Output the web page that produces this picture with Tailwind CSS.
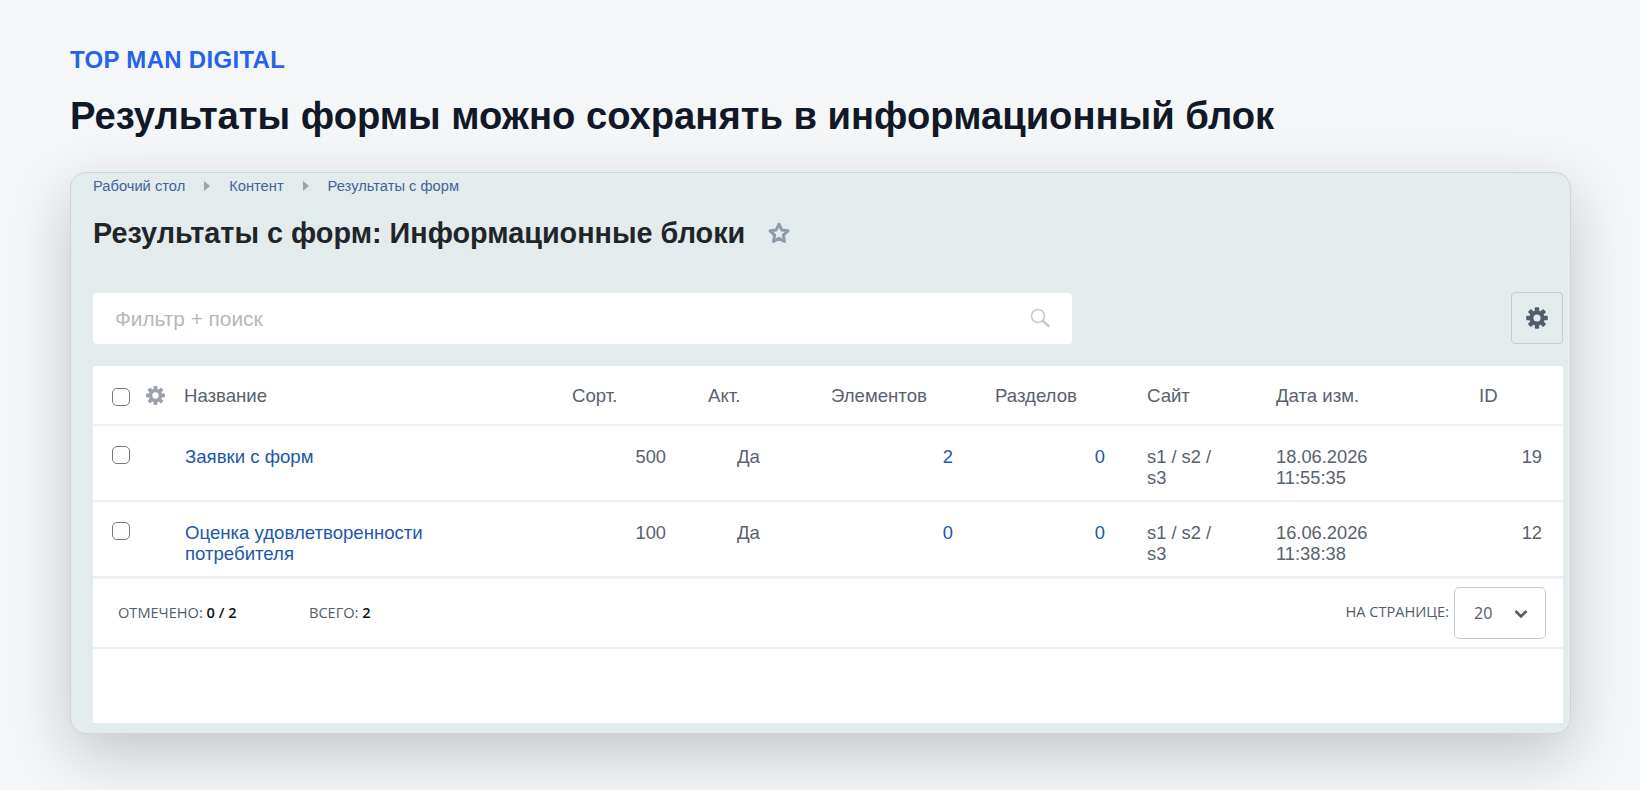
<!doctype html>
<html lang="ru">
<head>
<meta charset="utf-8">
<title>Результаты формы</title>
<script src="https://cdn.jsdelivr.net/npm/@tailwindcss/browser@4"></script>
</head>
<body class="m-0 h-[790px] w-[1640px] overflow-hidden bg-[#f4f6f8] font-['Liberation_Sans',Arial,sans-serif]">
<svg class="absolute h-0 w-0" aria-hidden="true"><defs>
  <g id="cog"><path fill-rule="evenodd" d="M12 4.400a7.600 7.600 0 1 0 0 15.200a7.600 7.600 0 0 0 0-15.200zM12 8.400a3.600 3.600 0 1 1 0 7.200a3.600 3.600 0 0 1 0-7.200z"/><rect x="9.800" y="1.200" width="4.400" height="5" rx="1"/><rect x="9.800" y="1.200" width="4.400" height="5" rx="1" transform="rotate(45 12 12)"/><rect x="9.800" y="1.200" width="4.400" height="5" rx="1" transform="rotate(90 12 12)"/><rect x="9.800" y="1.200" width="4.400" height="5" rx="1" transform="rotate(135 12 12)"/><rect x="9.800" y="1.200" width="4.400" height="5" rx="1" transform="rotate(180 12 12)"/><rect x="9.800" y="1.200" width="4.400" height="5" rx="1" transform="rotate(225 12 12)"/><rect x="9.800" y="1.200" width="4.400" height="5" rx="1" transform="rotate(270 12 12)"/><rect x="9.800" y="1.200" width="4.400" height="5" rx="1" transform="rotate(315 12 12)"/></g>
</defs></svg>
<main class="flex flex-col pl-[70px] pr-[69px]">
  <p class="mt-[44px] h-[32px] text-[24px] leading-[32px] font-bold tracking-[0.3px] text-[#2563eb]">TOP MAN DIGITAL</p>
  <h1 class="mt-[18px] h-[44px] text-[38.2px] leading-[44px] font-bold text-[#111827]">Результаты формы можно сохранять в информационный блок</h1>
  <section class="mt-[34px] flex h-[562px] flex-col rounded-[16px] border border-[#cdd5da] bg-[#e3ebed] pl-[22px] pr-[7px] pb-[10px] shadow-[0_20px_60px_rgba(0,0,0,0.2)]">
    <nav class="mt-[6px] flex h-[14px] items-center text-[14.7px] leading-[14px] text-[#3f659b]">
      <a>Рабочий стол</a>
      <svg class="mx-[19px] h-[10px] w-[6px]" viewBox="0 0 6 10"><path d="M0 0l6 5-6 5z" fill="#9aa5ae"/></svg>
      <a>Контент</a>
      <svg class="mx-[19px] h-[10px] w-[6px]" viewBox="0 0 6 10"><path d="M0 0l6 5-6 5z" fill="#9aa5ae"/></svg>
      <a>Результаты с форм</a>
    </nav>
    <div class="mt-[24px] flex h-[32px] items-center">
      <h2 class="text-[28.8px] leading-[32px] font-bold text-[#1f2529]">Результаты с форм: Информационные блоки</h2>
      <svg class="ml-[22px] h-[24px] w-[24px]" viewBox="0 0 24 24"><path d="M12 3.200l2.700 5.700 6.300.9-4.600 4.400 1.100 6.200-5.500-3-5.500 3 1.100-6.200-4.600-4.400 6.300-.9z" fill="none" stroke="#8f9bab" stroke-width="3" stroke-linejoin="round"/></svg>
    </div>
    <div class="mt-[43px] flex items-center justify-between">
      <div class="flex h-[51px] w-[979px] items-center justify-between rounded-[4px] bg-white pl-[22px] pr-[22px] text-[20.8px] text-[#b4b8bc]">
        <span class="pt-[1px]">Фильтр + поиск</span>
        <svg class="h-[20px] w-[20px]" viewBox="0 0 20 20" fill="none" stroke="#c6c9cc"><circle cx="8" cy="8" r="6.500" stroke-width="1.600"/><path d="M13 13l5.500 5" stroke-width="2.600" stroke-linecap="round"/></svg>
      </div>
      <button class="flex h-[52px] w-[52px] items-center justify-center rounded-[4px] border border-[#c3ccd2] bg-[#e3ebed]">
        <svg class="h-[24px] w-[24px] fill-[#535c69]" viewBox="0 0 24 24"><use href="#cog"/></svg>
      </button>
    </div>
    <div class="mt-[22px] flex flex-1 flex-col bg-white">
      <table class="w-full table-fixed border-collapse text-[18.6px] leading-[21px] text-[#59626e]">
        <colgroup>
          <col class="w-[91px]"><col class="w-[388px]"><col class="w-[136px]"><col class="w-[123px]"><col class="w-[164px]"><col class="w-[152px]"><col class="w-[129px]"><col class="w-[203px]"><col>
        </colgroup>
        <thead>
          <tr class="h-[59px] border-b-2 border-[#eef1f4] text-left">
            <th class="relative font-normal">
              <span class="absolute left-[19px] top-[22px] h-[18px] w-[18px] rounded-[5px] border-[1.500px] border-[#74777c]"></span>
              <svg class="absolute left-[52px] top-[19px] h-[21px] w-[21px] fill-[#9aa1aa]" viewBox="0 0 24 24"><use href="#cog"/></svg>
            </th>
            <th class="font-normal">Название</th>
            <th class="font-normal">Сорт.</th>
            <th class="font-normal">Акт.</th>
            <th class="font-normal">Элементов</th>
            <th class="font-normal">Разделов</th>
            <th class="font-normal">Сайт</th>
            <th class="font-normal">Дата изм.</th>
            <th class="font-normal">ID</th>
          </tr>
        </thead>
        <tbody>
          <tr class="h-[76px] border-b-2 border-[#eef1f4] align-top">
            <td class="relative"><span class="absolute left-[19px] top-[20px] h-[18px] w-[18px] rounded-[5px] border-[1.500px] border-[#74777c]"></span></td>
            <td class="pt-[20px] pl-[1px] text-[#2157ab]">Заявки с форм</td>
            <td class="pt-[20px] pr-[42px] text-right text-[18.3px]">500</td>
            <td class="pt-[20px] pl-[29px]">Да</td>
            <td class="pt-[20px] pr-[42px] text-right text-[18.3px] text-[#2157ab]">2</td>
            <td class="pt-[20px] pr-[42px] text-right text-[18.3px] text-[#2157ab]">0</td>
            <td class="pt-[20px] pr-[50px] text-[18.3px]">s1 / s2 / s3</td>
            <td class="pt-[20px] text-[18.3px]">18.06.2026<br>11:55:35</td>
            <td class="pt-[20px] pr-[21px] text-right text-[18.3px]">19</td>
          </tr>
          <tr class="h-[76px] border-b-[3px] border-[#eef1f4] align-top">
            <td class="relative"><span class="absolute left-[19px] top-[20px] h-[18px] w-[18px] rounded-[5px] border-[1.500px] border-[#74777c]"></span></td>
            <td class="pt-[20px] pl-[1px] text-[#2157ab]">Оценка удовлетворенности<br>потребителя</td>
            <td class="pt-[20px] pr-[42px] text-right text-[18.3px]">100</td>
            <td class="pt-[20px] pl-[29px]">Да</td>
            <td class="pt-[20px] pr-[42px] text-right text-[18.3px] text-[#2157ab]">0</td>
            <td class="pt-[20px] pr-[42px] text-right text-[18.3px] text-[#2157ab]">0</td>
            <td class="pt-[20px] pr-[50px] text-[18.3px]">s1 / s2 / s3</td>
            <td class="pt-[20px] text-[18.3px]">16.06.2026<br>11:38:38</td>
            <td class="pt-[20px] pr-[21px] text-right text-[18.3px]">12</td>
          </tr>
        </tbody>
      </table>
      <div class="flex h-[70px] items-center justify-between border-b-2 border-[#eef1f4] pl-[25px] pr-[17px] font-['Open_Sans',sans-serif] text-[14.6px] font-medium text-[#535c69]">
        <div class="flex pt-[1px]">
          <span class="w-[191px]">ОТМЕЧЕНО: <span class="font-semibold text-[#111]">0 / 2</span></span>
          <span>ВСЕГО: <span class="font-semibold text-[#111]">2</span></span>
        </div>
        <div class="flex items-center">
          <span class="mr-[5px] -mt-[2px]">НА СТРАНИЦЕ:</span>
          <div class="flex h-[52px] w-[92px] items-center justify-between rounded-[5px] border border-[#c3ccd2] pl-[19px] pr-[17px] text-[16px] font-normal">
            <span>20</span>
            <svg class="mt-[3px] h-[10px] w-[14px]" viewBox="0 0 14 10" fill="none" stroke="#535c69" stroke-width="2.600"><path d="M1.500 2l5.500 5.500L12.500 2"/></svg>
          </div>
        </div>
      </div>
    </div>
  </section>
</main>
</body>
</html>
